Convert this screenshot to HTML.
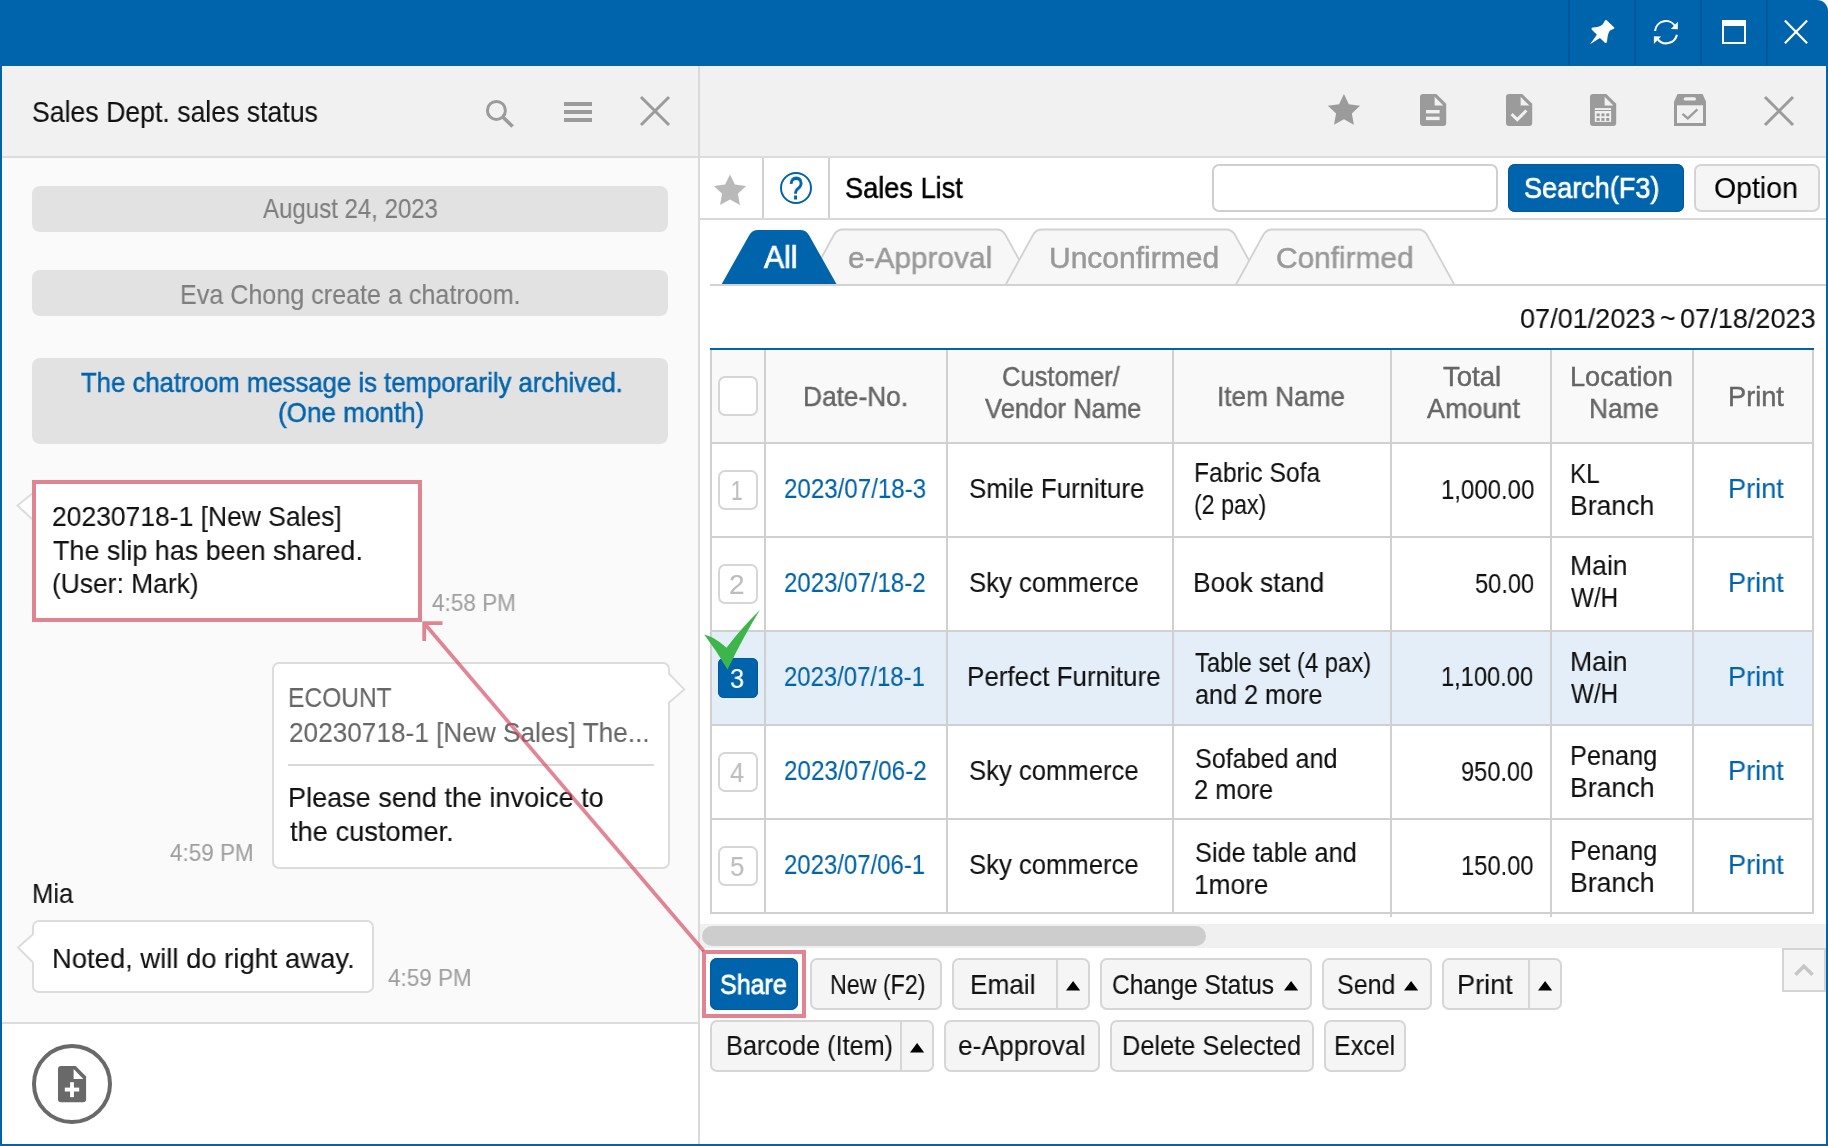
<!DOCTYPE html>
<html><head><meta charset="utf-8"><title>Sales List</title>
<style>
html,body{margin:0;padding:0;background:#fff;}
body{width:1828px;height:1146px;position:relative;overflow:hidden;font-family:"Liberation Sans",sans-serif;}
body>div,body>svg,body>span{position:absolute;}
svg{overflow:visible;}
.t{white-space:nowrap;transform-origin:0 0;display:block;will-change:transform;}
</style></head><body>
<div style="left:0px;top:0px;width:1828px;height:1146px;background:#0064ad;border-top-right-radius:11px"></div>
<div style="left:2px;top:66px;width:696px;height:90px;background:#f1f1f1"></div>
<div style="left:2px;top:156px;width:696px;height:2px;background:#dcdcdc"></div>
<div style="left:2px;top:158px;width:696px;height:864px;background:#fafafa"></div>
<div style="left:2px;top:1022px;width:696px;height:2px;background:#dcdcdc"></div>
<div style="left:2px;top:1024px;width:696px;height:120px;background:#fff"></div>
<div style="left:698px;top:66px;width:2px;height:1078px;background:#dadada"></div>
<div style="left:700px;top:66px;width:1126px;height:90px;background:#f1f1f1"></div>
<div style="left:700px;top:156px;width:1126px;height:2px;background:#dcdcdc"></div>
<div style="left:700px;top:158px;width:1126px;height:986px;background:#fff"></div>
<div style="left:1568px;top:0px;width:2px;height:65px;background:#00569b"></div>
<div style="left:1634px;top:0px;width:2px;height:65px;background:#00569b"></div>
<div style="left:1700px;top:0px;width:2px;height:65px;background:#00569b"></div>
<div style="left:1766px;top:0px;width:2px;height:65px;background:#00569b"></div>
<svg style="left:1589.8px;top:19.8px" width="25" height="25" viewBox="0 0 25 25" ><path fill="#fff" d="M16.4,0 L24.3,7.6 Q24.7,8.3 23.8,8.8 L20,10.5 Q17.5,13.5 17,22 Q16.2,23.6 15,22.8 L9.9,18 L0,24.3 L6.9,14.8 L1.6,9.6 Q1,8.2 2.6,7.5 Q9,7.5 12.8,4.3 L15,0.5 Q15.7,-0.3 16.4,0 Z"/></svg>
<svg style="left:1652px;top:18px" width="28" height="28" viewBox="0 0 28 28" ><g transform="translate(14,14.1)"><path d="M-10.9,-1.1 A10.9,10.9 0 0 1 9.6,-5.2" fill="none" stroke="#fff" stroke-width="2.1"/>
<path d="M11.8,-10.3 L11.8,-2.8 L4.9,-3.1 Z" fill="#fff"/>
<path d="M10.9,2.6 A10.9,10.9 0 0 1 -8.6,6.7" fill="none" stroke="#fff" stroke-width="2.1"/>
<path d="M-12.1,4.1 L-4.9,4.5 L-12.1,12 Z" fill="#fff"/></g></svg>
<div style="left:1722px;top:20px;width:24px;height:24px;border:2px solid #fff;border-top-width:6px;box-sizing:border-box"></div>
<svg style="left:1782px;top:18px" width="28" height="28" viewBox="0 0 28 28" ><path d="M2.9,2.6 L25.1,25.2 M25.1,2.6 L2.9,25.2" stroke="#fff" stroke-width="2.2" fill="none"/></svg>
<svg style="left:484px;top:98px" width="32" height="32" viewBox="0 0 32 32" ><circle cx="12.4" cy="12.4" r="9" fill="none" stroke="#9b9b9b" stroke-width="3"/><path d="M18.9,18.9 L28.6,28.6" stroke="#9b9b9b" stroke-width="3.6"/></svg>
<div style="left:564px;top:102px;width:28px;height:4px;background:#9b9b9b"></div>
<div style="left:564px;top:110px;width:28px;height:4px;background:#9b9b9b"></div>
<div style="left:564px;top:118px;width:28px;height:4px;background:#9b9b9b"></div>
<svg style="left:638px;top:94px" width="34" height="34" viewBox="0 0 34 34" ><path d="M3,3 L31,31 M31,3 L3,31" stroke="#9b9b9b" stroke-width="3" fill="none"/></svg>
<svg style="left:1324px;top:90px" width="40" height="40" viewBox="0 0 40 40" ><polygon points="19.95,4.10 24.83,14.29 36.02,15.78 27.84,23.56 29.88,34.67 19.95,29.30 10.02,34.67 12.06,23.56 3.88,15.78 15.07,14.29" fill="#9b9b9b"/></svg>
<svg style="left:1420px;top:93.8px" width="27" height="33" viewBox="0 0 27 33" ><path fill="#9b9b9b" d="M3,0 H16.3 L26.2,9.8 V29.1 Q26.2,32.1 23.2,32.1 H3 Q0,32.1 0,29.1 V3 Q0,0 3,0 Z"/><path fill="#f1f1f1" d="M14.6,2.8 V11.4 H23.3 Z"/><rect x="6" y="16" width="13.6" height="3.4" fill="#f1f1f1"/><rect x="6" y="22.7" width="13.6" height="3.4" fill="#f1f1f1"/></svg>
<svg style="left:1506px;top:93.8px" width="27" height="33" viewBox="0 0 27 33" ><path fill="#9b9b9b" d="M3,0 H16.3 L26.2,9.8 V29.1 Q26.2,32.1 23.2,32.1 H3 Q0,32.1 0,29.1 V3 Q0,0 3,0 Z"/><path fill="#f1f1f1" d="M14.6,2.8 V11.4 H23.3 Z"/><path d="M5.6,20.1 L11.3,25.6 L20.4,16.5" fill="none" stroke="#f1f1f1" stroke-width="3"/></svg>
<svg style="left:1590px;top:93.8px" width="27" height="33" viewBox="0 0 27 33" ><path fill="#9b9b9b" d="M3,0 H16.3 L26.2,9.8 V29.1 Q26.2,32.1 23.2,32.1 H3 Q0,32.1 0,29.1 V3 Q0,0 3,0 Z"/><path fill="#f1f1f1" d="M14.6,2.8 V11.4 H23.3 Z"/><rect x="4.8" y="14.1" width="16.3" height="13.8" fill="#f1f1f1"/><rect x="4.8" y="16" width="16.3" height="1" fill="#9b9b9b"/><rect x="6.6" y="19.4" width="3.1" height="2.9" fill="#9b9b9b"/><rect x="6.6" y="24.0" width="3.1" height="2.9" fill="#9b9b9b"/><rect x="11.4" y="19.4" width="3.1" height="2.9" fill="#9b9b9b"/><rect x="11.4" y="24.0" width="3.1" height="2.9" fill="#9b9b9b"/><rect x="16.2" y="19.4" width="3.1" height="2.9" fill="#9b9b9b"/><rect x="16.2" y="24.0" width="3.1" height="2.9" fill="#9b9b9b"/></svg>
<svg style="left:1674px;top:93.8px" width="33" height="33" viewBox="0 0 33 33" ><path fill="#9b9b9b" d="M3.5,0 H28.6 L32,7.8 V32.1 H0 V7.8 Z"/><rect x="9.7" y="3.2" width="12.3" height="3.4" rx="1.7" fill="#f1f1f1"/><rect x="3" y="11.3" width="26" height="17.7" fill="#f1f1f1"/><path d="M8.5,19.8 L13.8,24.4 L23.4,15.4" fill="none" stroke="#9b9b9b" stroke-width="2.2"/></svg>
<svg style="left:1762px;top:94px" width="34" height="34" viewBox="0 0 34 34" ><path d="M3,3 L31,31 M31,3 L3,31" stroke="#9b9b9b" stroke-width="3" fill="none"/></svg>
<div style="left:32px;top:186px;width:636px;height:46px;background:#e2e2e2;border-radius:8px"></div>
<div style="left:32px;top:270px;width:636px;height:46px;background:#e2e2e2;border-radius:8px"></div>
<div style="left:32px;top:358px;width:636px;height:86px;background:#e2e2e2;border-radius:8px"></div>
<span class="t" style="left:32.42px;top:94.750px;font-size:30px;line-height:33px;color:#111;-webkit-text-stroke:0.12px #111;transform:scaleX(0.8884)">Sales Dept. sales status</span>
<span class="t" style="left:263.00px;top:193.000px;font-size:28px;line-height:31px;color:#7e7e7e;-webkit-text-stroke:0.12px #7e7e7e;transform:scaleX(0.8580)">August 24, 2023</span>
<span class="t" style="left:179.54px;top:278.750px;font-size:28px;line-height:31px;color:#7e7e7e;-webkit-text-stroke:0.12px #7e7e7e;transform:scaleX(0.8967)">Eva Chong create a chatroom.</span>
<span class="t" style="left:81.40px;top:367.000px;font-size:27.2px;line-height:31px;color:#0064ad;-webkit-text-stroke:0.5px #0064ad;transform:scaleX(0.9462)">The chatroom message is temporarily archived.</span>
<span class="t" style="left:278.28px;top:397.000px;font-size:27.2px;line-height:31px;color:#0064ad;-webkit-text-stroke:0.5px #0064ad;transform:scaleX(0.9583)">(One month)</span>
<svg style="left:14px;top:488px" width="22" height="36" viewBox="0 0 22 36" ><path d="M19,5 L3.5,17.5 L19,32" fill="#fff" stroke="#dcdcdc" stroke-width="2"/></svg>
<div style="left:32px;top:480px;width:390px;height:142px;background:#fff;border:4px solid #df8490;box-sizing:border-box"></div>
<span class="t" style="left:51.76px;top:500.750px;font-size:28px;line-height:31px;color:#111;-webkit-text-stroke:0.12px #111;transform:scaleX(0.9451)">20230718-1 [New Sales]</span>
<span class="t" style="left:52.58px;top:534.500px;font-size:28px;line-height:31px;color:#111;-webkit-text-stroke:0.12px #111;transform:scaleX(0.9617)">The slip has been shared.</span>
<span class="t" style="left:51.76px;top:568.000px;font-size:28px;line-height:31px;color:#111;-webkit-text-stroke:0.12px #111;transform:scaleX(0.9425)">(User: Mark)</span>
<span class="t" style="left:432.15px;top:590.250px;font-size:23px;line-height:26px;color:#a0a0a0;-webkit-text-stroke:0.12px #a0a0a0;transform:scaleX(0.9792)">4:58 PM</span>
<div style="left:272px;top:662px;width:398px;height:207px;background:#fff;border:2px solid #dcdcdc;border-radius:7px;box-sizing:border-box"></div>
<svg style="left:666px;top:664px" width="22" height="44" viewBox="0 0 22 44" ><path d="M2,4 V10 L18.2,25.4 L2,38.5 V42" fill="#fff"/><path d="M3,9.6 L18.2,25.4 L3,38.8" fill="none" stroke="#dcdcdc" stroke-width="2"/></svg>
<span class="t" style="left:288.08px;top:682.000px;font-size:28px;line-height:31px;color:#666;-webkit-text-stroke:0.12px #666;transform:scaleX(0.8762)">ECOUNT</span>
<span class="t" style="left:288.77px;top:717.000px;font-size:28px;line-height:31px;color:#666;-webkit-text-stroke:0.12px #666;transform:scaleX(0.9354)">20230718-1 [New Sales] The...</span>
<div style="left:288px;top:764px;width:366px;height:2px;background:#d9d9d9"></div>
<span class="t" style="left:287.89px;top:782.000px;font-size:28px;line-height:31px;color:#111;-webkit-text-stroke:0.12px #111;transform:scaleX(0.9658)">Please send the invoice to</span>
<span class="t" style="left:290.00px;top:816.250px;font-size:28px;line-height:31px;color:#111;-webkit-text-stroke:0.12px #111;transform:scaleX(0.9740)">the customer.</span>
<span class="t" style="left:170.40px;top:840.250px;font-size:23px;line-height:26px;color:#a0a0a0;-webkit-text-stroke:0.12px #a0a0a0;transform:scaleX(0.9762)">4:59 PM</span>
<span class="t" style="left:31.75px;top:878.250px;font-size:28px;line-height:31px;color:#111;-webkit-text-stroke:0.12px #111;transform:scaleX(0.9163)">Mia</span>
<div style="left:32px;top:920px;width:342px;height:73px;background:#fff;border:2px solid #dcdcdc;border-radius:7px;box-sizing:border-box"></div>
<svg style="left:14px;top:930px" width="22" height="36" viewBox="0 0 22 36" ><path d="M20,4.2 L4,17.5 L20,32.5" fill="#fff"/><path d="M19,4.2 L4,17.5 L19,32.5" fill="none" stroke="#dcdcdc" stroke-width="2"/></svg>
<span class="t" style="left:51.61px;top:942.500px;font-size:28px;line-height:31px;color:#111;-webkit-text-stroke:0.12px #111;transform:scaleX(0.9788)">Noted, will do right away.</span>
<span class="t" style="left:387.90px;top:964.500px;font-size:23px;line-height:26px;color:#a0a0a0;-webkit-text-stroke:0.12px #a0a0a0;transform:scaleX(0.9762)">4:59 PM</span>
<div style="left:32px;top:1044px;width:80px;height:80px;border:4px solid #696969;border-radius:50%;box-sizing:border-box"></div>
<svg style="left:58px;top:1065.9px" width="29" height="37" viewBox="0 0 29 37" ><path fill="#696969" d="M3,0 H17.7 L28.1,10.4 V33.2 Q28.1,36.2 25.1,36.2 H3 Q0,36.2 0,33.2 V3 Q0,0 3,0 Z"/><path fill="#fff" d="M15.6,3.1 V13 H25.3 Z"/><rect x="6.8" y="21.6" width="14.4" height="3.9" fill="#fff"/><rect x="12.1" y="16.2" width="3.8" height="14.9" fill="#fff"/></svg>
<div style="left:762px;top:158px;width:2px;height:60px;background:#d2d2d2"></div>
<div style="left:828px;top:158px;width:2px;height:60px;background:#d2d2d2"></div>
<div style="left:700px;top:218px;width:1126px;height:2px;background:#d8d8d8"></div>
<svg style="left:712px;top:171px" width="36" height="36" viewBox="0 0 36 36" ><polygon points="18.00,3.40 22.88,13.59 34.07,15.08 25.89,22.86 27.93,33.97 18.00,28.60 8.07,33.97 10.11,22.86 1.93,15.08 13.12,13.59" fill="#b9b9b9"/></svg>
<div style="left:780px;top:172px;width:32px;height:32px;border:2.6px solid #0064ad;border-radius:50%;box-sizing:border-box"></div>
<span class="t" style="left:788.81px;top:171.200px;font-size:31px;line-height:35px;color:#0064ad;-webkit-text-stroke:0.9px #0064ad;transform:scaleX(0.8129)">?</span>
<span class="t" style="left:844.65px;top:170.500px;font-size:30px;line-height:33px;color:#000;-webkit-text-stroke:0.5px #000;transform:scaleX(0.9054)">Sales List</span>
<div style="left:1212px;top:164px;width:286px;height:48px;background:#fff;border:2px solid #cfcfcf;border-radius:7px;box-sizing:border-box"></div>
<div style="left:1508px;top:164px;width:176px;height:48px;background:#0064ad;border-radius:7px;box-shadow:inset 0 0 0 1px #00589f"></div>
<span class="t" style="left:1524.40px;top:170.500px;font-size:30px;line-height:33px;color:#fff;-webkit-text-stroke:0.7px #fff;transform:scaleX(0.9031)">Search(F3)</span>
<div style="left:1694px;top:164px;width:126px;height:48px;background:#f5f5f5;border:2px solid #d4d4d4;border-radius:7px;box-sizing:border-box"></div>
<span class="t" style="left:1714.16px;top:170.500px;font-size:30px;line-height:33px;color:#000;-webkit-text-stroke:0.12px #000;transform:scaleX(0.9496)">Option</span>
<svg style="left:0;top:0" width="1828" height="300" viewBox="0 0 1828 300"><path d="M806.4,285 L833.98,234.74 Q836.9,229.5 842.9,229.5 L996.5,229.5 Q1002.5,229.5 1005.42,234.74 L1033,285" fill="#f7f7f7" stroke="#d2d2d2" stroke-width="1.8"/><path d="M1005.5,285 L1033.08,234.74 Q1036.0,229.5 1042.0,229.5 L1226.0,229.5 Q1232.0,229.5 1234.92,234.74 L1262.5,285" fill="#f7f7f7" stroke="#d2d2d2" stroke-width="1.8"/><path d="M1235.75,285 L1263.33,234.74 Q1266.25,229.5 1272.25,229.5 L1418.0,229.5 Q1424.0,229.5 1426.92,234.74 L1454.5,285" fill="#f7f7f7" stroke="#d2d2d2" stroke-width="1.8"/></svg>
<svg style="left:0;top:0" width="1828" height="300" viewBox="0 0 1828 300"><path d="M721.6,284.3 L749.18,235.24 Q752.1,230 758.1,230 L800.1,230 Q806.1,230 809.02,235.24 L836.6,284.3" fill="#0064ad" /></svg>
<div style="left:710px;top:284px;width:1116px;height:2px;background:#d2d2d2"></div>
<span class="t" style="left:764.25px;top:240.000px;font-size:31px;line-height:35px;color:#fff;-webkit-text-stroke:0.7px #fff;transform:scaleX(0.9720)">All</span>
<span class="t" style="left:847.82px;top:240.500px;font-size:30px;line-height:33px;color:#999;-webkit-text-stroke:0.5px #999;transform:scaleX(0.9936)">e-Approval</span>
<span class="t" style="left:1049.38px;top:240.500px;font-size:30px;line-height:33px;color:#999;-webkit-text-stroke:0.5px #999;transform:scaleX(0.9984)">Unconfirmed</span>
<span class="t" style="left:1276.10px;top:240.500px;font-size:30px;line-height:33px;color:#999;-webkit-text-stroke:0.5px #999;transform:scaleX(0.9941)">Confirmed</span>
<span class="t" style="left:1519.65px;top:302.500px;font-size:28px;line-height:31px;color:#111;-webkit-text-stroke:0.12px #111;transform:scaleX(0.9665)">07/01/2023</span>
<span class="t" style="left:1660.17px;top:302.500px;font-size:28px;line-height:31px;color:#111;-webkit-text-stroke:0.12px #111;transform:scaleX(0.9524)">~</span>
<span class="t" style="left:1680.15px;top:302.500px;font-size:28px;line-height:31px;color:#111;-webkit-text-stroke:0.12px #111;transform:scaleX(0.9683)">07/18/2023</span>
<div style="left:710px;top:348px;width:1104px;height:2px;background:#0064ad"></div>
<div style="left:710px;top:350px;width:1104px;height:92px;background:#f9f9f9"></div>
<div style="left:710px;top:632px;width:1104px;height:92px;background:#e4eef8"></div>
<div style="left:710px;top:442px;width:1104px;height:2px;background:#d0d0d0"></div>
<div style="left:710px;top:536px;width:1104px;height:2px;background:#d0d0d0"></div>
<div style="left:710px;top:630px;width:1104px;height:2px;background:#d0d0d0"></div>
<div style="left:710px;top:724px;width:1104px;height:2px;background:#d0d0d0"></div>
<div style="left:710px;top:818px;width:1104px;height:2px;background:#d0d0d0"></div>
<div style="left:710px;top:912px;width:1104px;height:2px;background:#d0d0d0"></div>
<div style="left:710px;top:350px;width:2px;height:564px;background:#d0d0d0"></div>
<div style="left:764px;top:350px;width:2px;height:564px;background:#d0d0d0"></div>
<div style="left:946px;top:350px;width:2px;height:564px;background:#d0d0d0"></div>
<div style="left:1172px;top:350px;width:2px;height:564px;background:#d0d0d0"></div>
<div style="left:1390px;top:350px;width:2px;height:567px;background:#d0d0d0"></div>
<div style="left:1550px;top:350px;width:2px;height:567px;background:#d0d0d0"></div>
<div style="left:1692px;top:350px;width:2px;height:564px;background:#d0d0d0"></div>
<div style="left:1812px;top:350px;width:2px;height:564px;background:#d0d0d0"></div>
<span class="t" style="left:803.45px;top:380.500px;font-size:27.2px;line-height:31px;color:#666;-webkit-text-stroke:0.45px #666;transform:scaleX(0.9664)">Date-No.</span>
<span class="t" style="left:1002.05px;top:360.750px;font-size:27.2px;line-height:31px;color:#666;-webkit-text-stroke:0.45px #666;transform:scaleX(0.9395)">Customer/</span>
<span class="t" style="left:984.50px;top:392.500px;font-size:27.2px;line-height:31px;color:#666;-webkit-text-stroke:0.45px #666;transform:scaleX(0.9412)">Vendor Name</span>
<span class="t" style="left:1217.45px;top:380.500px;font-size:27.2px;line-height:31px;color:#666;-webkit-text-stroke:0.45px #666;transform:scaleX(0.9631)">Item Name</span>
<span class="t" style="left:1442.57px;top:361.000px;font-size:27.2px;line-height:31px;color:#666;-webkit-text-stroke:0.45px #666;transform:scaleX(1.0138)">Total</span>
<span class="t" style="left:1427.25px;top:393.000px;font-size:27.2px;line-height:31px;color:#666;-webkit-text-stroke:0.45px #666;transform:scaleX(0.9911)">Amount</span>
<span class="t" style="left:1570.13px;top:361.000px;font-size:27.2px;line-height:31px;color:#666;-webkit-text-stroke:0.45px #666;transform:scaleX(0.9956)">Location</span>
<span class="t" style="left:1588.95px;top:393.000px;font-size:27.2px;line-height:31px;color:#666;-webkit-text-stroke:0.45px #666;transform:scaleX(0.9628)">Name</span>
<span class="t" style="left:1727.63px;top:380.500px;font-size:27.2px;line-height:31px;color:#666;-webkit-text-stroke:0.45px #666;transform:scaleX(0.9973)">Print</span>
<div style="left:718px;top:376px;width:40px;height:40px;background:#fff;border:2px solid #d6d6d6;border-radius:7px;box-sizing:border-box"></div>
<div style="left:718px;top:470px;width:40px;height:40px;background:#fff;border:2px solid #d6d6d6;border-radius:7px;box-sizing:border-box"></div>
<div style="left:718px;top:564px;width:40px;height:40px;background:#fff;border:2px solid #d6d6d6;border-radius:7px;box-sizing:border-box"></div>
<div style="left:718px;top:658px;width:40px;height:40px;background:#0064ad;border-radius:6px;box-shadow:inset 0 0 0 1px #00589f"></div>
<div style="left:718px;top:752px;width:40px;height:40px;background:#fff;border:2px solid #d6d6d6;border-radius:7px;box-sizing:border-box"></div>
<div style="left:718px;top:846px;width:40px;height:40px;background:#fff;border:2px solid #d6d6d6;border-radius:7px;box-sizing:border-box"></div>
<span class="t" style="left:730.69px;top:475.000px;font-size:28px;line-height:31px;color:#bdbdbd;-webkit-text-stroke:0.12px #bdbdbd;transform:scaleX(0.7488)">1</span>
<span class="t" style="left:729.20px;top:569.000px;font-size:28px;line-height:31px;color:#bdbdbd;-webkit-text-stroke:0.12px #bdbdbd;transform:scaleX(0.9905)">2</span>
<span class="t" style="left:730.01px;top:663.000px;font-size:28px;line-height:31px;color:#fff;-webkit-text-stroke:0.12px #fff;transform:scaleX(0.9069)">3</span>
<span class="t" style="left:730.10px;top:757.000px;font-size:28px;line-height:31px;color:#bdbdbd;-webkit-text-stroke:0.12px #bdbdbd;transform:scaleX(0.9074)">4</span>
<span class="t" style="left:730.19px;top:851.000px;font-size:28px;line-height:31px;color:#bdbdbd;-webkit-text-stroke:0.12px #bdbdbd;transform:scaleX(0.9217)">5</span>
<span class="t" style="left:783.87px;top:473.000px;font-size:28px;line-height:31px;color:#0064ad;-webkit-text-stroke:0.12px #0064ad;transform:scaleX(0.8611)">2023/07/18-3</span>
<span class="t" style="left:783.87px;top:567.000px;font-size:28px;line-height:31px;color:#0064ad;-webkit-text-stroke:0.12px #0064ad;transform:scaleX(0.8580)">2023/07/18-2</span>
<span class="t" style="left:783.88px;top:660.750px;font-size:28px;line-height:31px;color:#0064ad;-webkit-text-stroke:0.12px #0064ad;transform:scaleX(0.8534)">2023/07/18-1</span>
<span class="t" style="left:783.87px;top:755.000px;font-size:28px;line-height:31px;color:#0064ad;-webkit-text-stroke:0.12px #0064ad;transform:scaleX(0.8642)">2023/07/06-2</span>
<span class="t" style="left:783.88px;top:849.250px;font-size:28px;line-height:31px;color:#0064ad;-webkit-text-stroke:0.12px #0064ad;transform:scaleX(0.8549)">2023/07/06-1</span>
<span class="t" style="left:968.69px;top:473.000px;font-size:28px;line-height:31px;color:#111;-webkit-text-stroke:0.12px #111;transform:scaleX(0.9237)">Smile Furniture</span>
<span class="t" style="left:968.70px;top:567.000px;font-size:28px;line-height:31px;color:#111;-webkit-text-stroke:0.12px #111;transform:scaleX(0.9174)">Sky commerce</span>
<span class="t" style="left:967.47px;top:660.750px;font-size:28px;line-height:31px;color:#111;-webkit-text-stroke:0.12px #111;transform:scaleX(0.9284)">Perfect Furniture</span>
<span class="t" style="left:968.70px;top:755.000px;font-size:28px;line-height:31px;color:#111;-webkit-text-stroke:0.12px #111;transform:scaleX(0.9163)">Sky commerce</span>
<span class="t" style="left:968.70px;top:849.250px;font-size:28px;line-height:31px;color:#111;-webkit-text-stroke:0.12px #111;transform:scaleX(0.9163)">Sky commerce</span>
<span class="t" style="left:1193.57px;top:456.750px;font-size:28px;line-height:31px;color:#111;-webkit-text-stroke:0.12px #111;transform:scaleX(0.8820)">Fabric Sofa</span>
<span class="t" style="left:1194.41px;top:488.750px;font-size:28px;line-height:31px;color:#111;-webkit-text-stroke:0.12px #111;transform:scaleX(0.8296)">(2 pax)</span>
<span class="t" style="left:1193.45px;top:567.000px;font-size:28px;line-height:31px;color:#111;-webkit-text-stroke:0.12px #111;transform:scaleX(0.9370)">Book stand</span>
<span class="t" style="left:1195.13px;top:647.000px;font-size:28px;line-height:31px;color:#111;-webkit-text-stroke:0.12px #111;transform:scaleX(0.8508)">Table set (4 pax)</span>
<span class="t" style="left:1194.71px;top:678.750px;font-size:28px;line-height:31px;color:#111;-webkit-text-stroke:0.12px #111;transform:scaleX(0.9006)">and 2 more</span>
<span class="t" style="left:1194.72px;top:742.500px;font-size:28px;line-height:31px;color:#111;-webkit-text-stroke:0.12px #111;transform:scaleX(0.8969)">Sofabed and</span>
<span class="t" style="left:1194.31px;top:774.250px;font-size:28px;line-height:31px;color:#111;-webkit-text-stroke:0.12px #111;transform:scaleX(0.9091)">2 more</span>
<span class="t" style="left:1194.71px;top:836.750px;font-size:28px;line-height:31px;color:#111;-webkit-text-stroke:0.12px #111;transform:scaleX(0.9032)">Side table and</span>
<span class="t" style="left:1193.86px;top:868.750px;font-size:28px;line-height:31px;color:#111;-webkit-text-stroke:0.12px #111;transform:scaleX(0.9375)">1more</span>
<span class="t" style="left:1440.50px;top:473.750px;font-size:28px;line-height:31px;color:#111;-webkit-text-stroke:0.12px #111;transform:scaleX(0.8564)">1,000.00</span>
<span class="t" style="left:1475.01px;top:567.500px;font-size:28px;line-height:31px;color:#111;-webkit-text-stroke:0.12px #111;transform:scaleX(0.8431)">50.00</span>
<span class="t" style="left:1440.52px;top:661.250px;font-size:28px;line-height:31px;color:#111;-webkit-text-stroke:0.12px #111;transform:scaleX(0.8447)">1,100.00</span>
<span class="t" style="left:1460.89px;top:755.750px;font-size:28px;line-height:31px;color:#111;-webkit-text-stroke:0.12px #111;transform:scaleX(0.8430)">950.00</span>
<span class="t" style="left:1461.02px;top:850.000px;font-size:28px;line-height:31px;color:#111;-webkit-text-stroke:0.12px #111;transform:scaleX(0.8474)">150.00</span>
<span class="t" style="left:1569.81px;top:458.000px;font-size:28px;line-height:31px;color:#111;-webkit-text-stroke:0.12px #111;transform:scaleX(0.8641)">KL</span>
<span class="t" style="left:1569.62px;top:490.000px;font-size:28px;line-height:31px;color:#111;-webkit-text-stroke:0.12px #111;transform:scaleX(0.9487)">Branch</span>
<span class="t" style="left:1569.62px;top:550.000px;font-size:28px;line-height:31px;color:#111;-webkit-text-stroke:0.12px #111;transform:scaleX(0.9494)">Main</span>
<span class="t" style="left:1571.20px;top:581.600px;font-size:28px;line-height:31px;color:#111;-webkit-text-stroke:0.12px #111;transform:scaleX(0.8639)">W/H</span>
<span class="t" style="left:1569.62px;top:645.500px;font-size:28px;line-height:31px;color:#111;-webkit-text-stroke:0.12px #111;transform:scaleX(0.9494)">Main</span>
<span class="t" style="left:1571.20px;top:677.500px;font-size:28px;line-height:31px;color:#111;-webkit-text-stroke:0.12px #111;transform:scaleX(0.8639)">W/H</span>
<span class="t" style="left:1569.72px;top:739.500px;font-size:28px;line-height:31px;color:#111;-webkit-text-stroke:0.12px #111;transform:scaleX(0.9032)">Penang</span>
<span class="t" style="left:1569.62px;top:771.750px;font-size:28px;line-height:31px;color:#111;-webkit-text-stroke:0.12px #111;transform:scaleX(0.9511)">Branch</span>
<span class="t" style="left:1569.72px;top:834.500px;font-size:28px;line-height:31px;color:#111;-webkit-text-stroke:0.12px #111;transform:scaleX(0.9032)">Penang</span>
<span class="t" style="left:1569.62px;top:866.750px;font-size:28px;line-height:31px;color:#111;-webkit-text-stroke:0.12px #111;transform:scaleX(0.9511)">Branch</span>
<span class="t" style="left:1727.88px;top:473.000px;font-size:28px;line-height:31px;color:#0064ad;-webkit-text-stroke:0.12px #0064ad;transform:scaleX(0.9688)">Print</span>
<span class="t" style="left:1727.88px;top:567.000px;font-size:28px;line-height:31px;color:#0064ad;-webkit-text-stroke:0.12px #0064ad;transform:scaleX(0.9688)">Print</span>
<span class="t" style="left:1727.88px;top:660.750px;font-size:28px;line-height:31px;color:#0064ad;-webkit-text-stroke:0.12px #0064ad;transform:scaleX(0.9688)">Print</span>
<span class="t" style="left:1727.88px;top:755.000px;font-size:28px;line-height:31px;color:#0064ad;-webkit-text-stroke:0.12px #0064ad;transform:scaleX(0.9688)">Print</span>
<span class="t" style="left:1727.88px;top:849.250px;font-size:28px;line-height:31px;color:#0064ad;-webkit-text-stroke:0.12px #0064ad;transform:scaleX(0.9688)">Print</span>
<svg style="left:700px;top:600px" width="70" height="80" viewBox="700 600 70 80"><path fill="#3cb54a" d="M704.2,634.4 Q716,637.6 726.5,647.8 Q742,627.5 759.9,610.1 Q745,634 727.5,669.4 Q716.5,650.5 704.2,634.4 Z"/></svg>
<div style="left:700px;top:924px;width:1126px;height:24px;background:#f0f0f0"></div>
<div style="left:702px;top:926px;width:504px;height:20px;background:#cdcdcd;border-radius:10px"></div>
<div style="left:1782px;top:948px;width:44px;height:44px;background:#f5f5f5;border:2px solid #d4d4d4;box-sizing:border-box"></div>
<svg style="left:1790px;top:960px" width="28" height="22" viewBox="0 0 28 22" ><path d="M5.5,14.8 L13.9,6.3 L22.5,14.8" fill="none" stroke="#c6c6c6" stroke-width="3.6"/></svg>
<div style="left:710px;top:958px;width:88px;height:52px;background:#0064ad;border-radius:7px;box-shadow:inset 0 0 0 1px #00589f"></div>
<span class="t" style="left:720.47px;top:968.750px;font-size:27.2px;line-height:31px;color:#fff;-webkit-text-stroke:0.8px #fff;transform:scaleX(0.9203)">Share</span>
<div style="left:810px;top:958px;width:132px;height:52px;background:#f5f5f5;border:2px solid #d6d6d6;border-radius:7px;box-sizing:border-box"></div>
<span class="t" style="left:829.93px;top:968.750px;font-size:28px;line-height:31px;color:#111;-webkit-text-stroke:0.12px #111;transform:scaleX(0.8297)">New (F2)</span>
<div style="left:952px;top:958px;width:138px;height:52px;background:#f5f5f5;border:2px solid #d6d6d6;border-radius:7px;box-sizing:border-box"></div>
<div style="left:1056px;top:960px;width:2px;height:48px;background:#d6d6d6"></div>
<span class="t" style="left:969.95px;top:968.750px;font-size:28px;line-height:31px;color:#111;-webkit-text-stroke:0.12px #111;transform:scaleX(0.9359)">Email</span>
<svg style="left:1065.8px;top:980.7px" width="15" height="10" viewBox="0 0 15 10" ><path d="M0,9.4 L7.1,0 L14.2,9.4 Z" fill="#000"/></svg>
<div style="left:1100px;top:958px;width:212px;height:52px;background:#f5f5f5;border:2px solid #d6d6d6;border-radius:7px;box-sizing:border-box"></div>
<span class="t" style="left:1112.10px;top:968.750px;font-size:28px;line-height:31px;color:#111;-webkit-text-stroke:0.12px #111;transform:scaleX(0.8741)">Change Status</span>
<svg style="left:1284.2px;top:980.7px" width="15" height="10" viewBox="0 0 15 10" ><path d="M0,9.4 L7.1,0 L14.2,9.4 Z" fill="#000"/></svg>
<div style="left:1322px;top:958px;width:110px;height:52px;background:#f5f5f5;border:2px solid #d6d6d6;border-radius:7px;box-sizing:border-box"></div>
<span class="t" style="left:1336.72px;top:968.750px;font-size:28px;line-height:31px;color:#111;-webkit-text-stroke:0.12px #111;transform:scaleX(0.8936)">Send</span>
<svg style="left:1404px;top:980.7px" width="15" height="10" viewBox="0 0 15 10" ><path d="M0,9.4 L7.1,0 L14.2,9.4 Z" fill="#000"/></svg>
<div style="left:1442px;top:958px;width:120px;height:52px;background:#f5f5f5;border:2px solid #d6d6d6;border-radius:7px;box-sizing:border-box"></div>
<div style="left:1528px;top:960px;width:2px;height:48px;background:#d6d6d6"></div>
<span class="t" style="left:1457.38px;top:968.750px;font-size:28px;line-height:31px;color:#111;-webkit-text-stroke:0.12px #111;transform:scaleX(0.9688)">Print</span>
<svg style="left:1538px;top:980.7px" width="15" height="10" viewBox="0 0 15 10" ><path d="M0,9.4 L7.1,0 L14.2,9.4 Z" fill="#000"/></svg>
<div style="left:710px;top:1020px;width:224px;height:52px;background:#f5f5f5;border:2px solid #d6d6d6;border-radius:7px;box-sizing:border-box"></div>
<div style="left:900px;top:1022px;width:2px;height:48px;background:#d6d6d6"></div>
<span class="t" style="left:725.53px;top:1030.000px;font-size:28px;line-height:31px;color:#111;-webkit-text-stroke:0.12px #111;transform:scaleX(0.9020)">Barcode (Item)</span>
<svg style="left:910px;top:1042.5px" width="15" height="10" viewBox="0 0 15 10" ><path d="M0,9.4 L7.1,0 L14.2,9.4 Z" fill="#000"/></svg>
<div style="left:944px;top:1020px;width:156px;height:52px;background:#f5f5f5;border:2px solid #d6d6d6;border-radius:7px;box-sizing:border-box"></div>
<span class="t" style="left:957.93px;top:1030.000px;font-size:28px;line-height:31px;color:#111;-webkit-text-stroke:0.12px #111;transform:scaleX(0.9421)">e-Approval</span>
<div style="left:1110px;top:1020px;width:204px;height:52px;background:#f5f5f5;border:2px solid #d6d6d6;border-radius:7px;box-sizing:border-box"></div>
<span class="t" style="left:1121.77px;top:1030.000px;font-size:28px;line-height:31px;color:#111;-webkit-text-stroke:0.12px #111;transform:scaleX(0.9063)">Delete Selected</span>
<div style="left:1324px;top:1020px;width:82px;height:52px;background:#f5f5f5;border:2px solid #d6d6d6;border-radius:7px;box-sizing:border-box"></div>
<span class="t" style="left:1333.55px;top:1030.000px;font-size:28px;line-height:31px;color:#111;-webkit-text-stroke:0.12px #111;transform:scaleX(0.8924)">Excel</span>
<div style="left:702px;top:950px;width:104px;height:68px;border:4px solid #df8490;box-sizing:border-box"></div>
<svg style="left:0;top:0" width="1828" height="1146" viewBox="0 0 1828 1146"><path d="M424,623 L703.7,951" stroke="rgba(212,70,92,0.66)" stroke-width="3.7" fill="none"/><path d="M442.5,623.2 H424.2 V641" stroke="#df8490" stroke-width="3.8" fill="none"/></svg>
</body></html>
